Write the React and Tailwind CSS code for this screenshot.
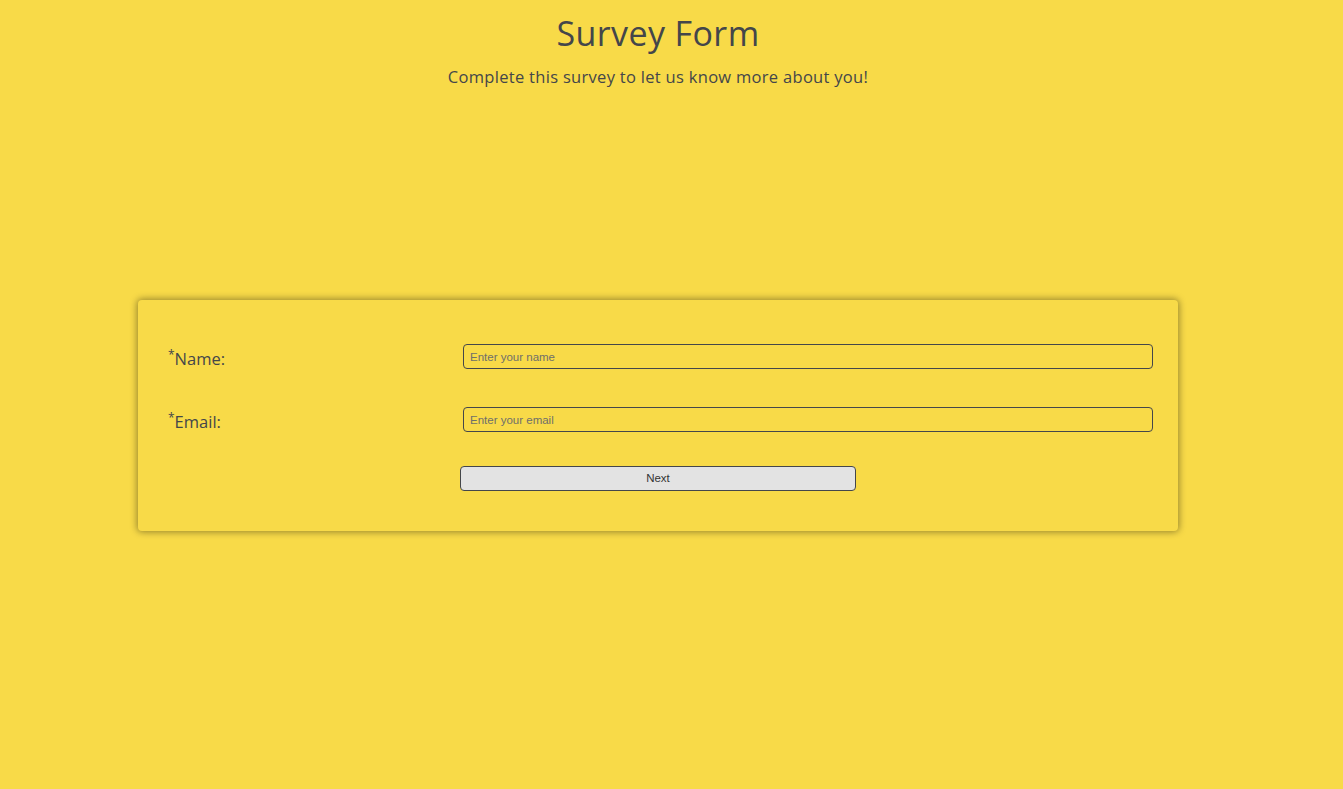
export default function App() {
  return (
    <div className="min-h-[789px] w-full bg-[#f8da48] text-[#44464a]" style={{ fontFamily: '"Open Sans", "Liberation Sans", sans-serif' }}>
      <div className="w-[1316px]">
        <header className="flex flex-col items-center pt-[12px]">
          <h1 className="text-[34px] leading-[42px] font-normal tracking-[0.4px]">Survey Form</h1>
          <p className="mt-[11px] text-[16.5px] leading-[24px] tracking-[0.3px]">Complete this survey to let us know more about you!</p>
        </header>
        <div className="mx-[138px] mt-[211px] rounded-[4px] bg-[#f8da48] shadow-[0_0_7px_1px_rgba(0,0,0,0.4)] pt-[44px] pb-[40px] pl-[30px] pr-[25px]">
          <div className="flex items-center h-[25px]">
            <label className="w-[295px] text-[16.5px] leading-[25px] pt-[3px]">
              <sup className="text-[12px]">*</sup>Name:
            </label>
            <input
              type="text"
              placeholder="Enter your name"
              className="flex-1 h-[25px] rounded-[4px] border border-[#44464a] bg-transparent px-[6px] text-[11.5px] placeholder:text-[#6f6f6a] outline-none"
              style={{ fontFamily: '"Liberation Sans", Arial, sans-serif' }}
            />
          </div>
          <div className="flex items-center h-[25px] mt-[38px]">
            <label className="w-[295px] text-[16.5px] leading-[25px] pt-[3px]">
              <sup className="text-[12px]">*</sup>Email:
            </label>
            <input
              type="email"
              placeholder="Enter your email"
              className="flex-1 h-[25px] rounded-[4px] border border-[#44464a] bg-transparent px-[6px] text-[11.5px] placeholder:text-[#6f6f6a] outline-none"
              style={{ fontFamily: '"Liberation Sans", Arial, sans-serif' }}
            />
          </div>
          <div className="flex justify-center mt-[34px] pr-[5px]">
            <button
              className="w-[396px] h-[25px] rounded-[4px] border border-[#44464a] bg-[#e3e3e3] text-[11.5px] text-[#333]"
              style={{ fontFamily: '"Liberation Sans", Arial, sans-serif' }}
            >
              Next
            </button>
          </div>
        </div>
      </div>
    </div>
  );
}
